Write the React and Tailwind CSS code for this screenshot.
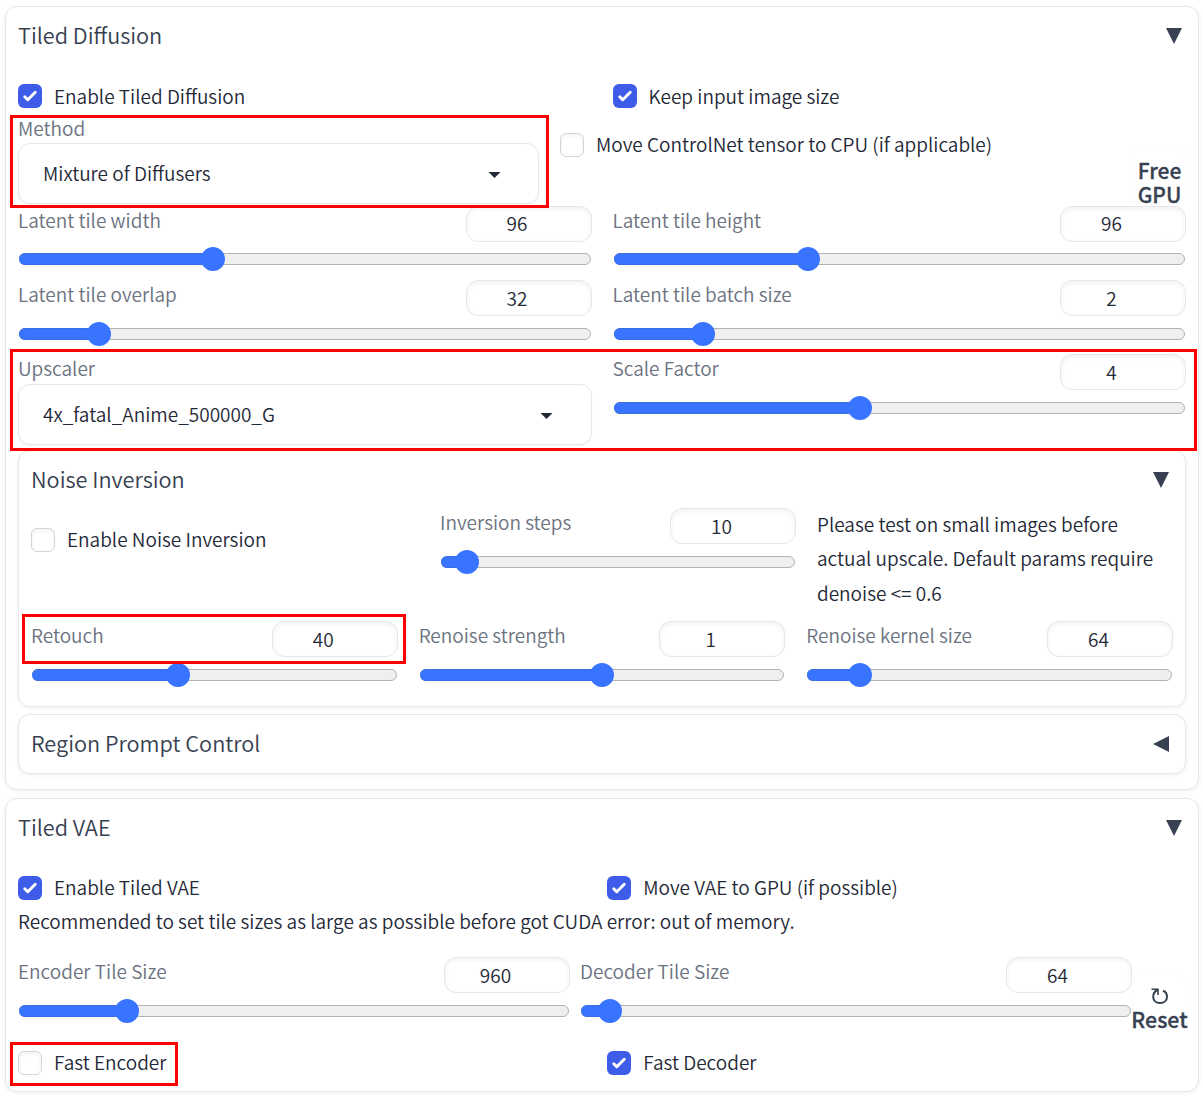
import React from "react";

const CHECK =
  "M12.207 4.793a1 1 0 010 1.414l-5 5a1 1 0 01-1.414 0l-2-2a1 1 0 011.414-1.414L6.5 9.086l4.293-4.293a1 1 0 011.414 0z";

function Checkbox({ checked, children, lift = "pb-[3px]" }) {
  return (
    <label className="flex h-6 items-center gap-3 whitespace-nowrap">
      {checked ? (
        <span className="h-6 w-6 shrink-0 rounded-[6px] bg-[#3d5de8]">
          <svg viewBox="0 0 16 16" className="h-6 w-6" fill="white">
            <path d={CHECK} />
          </svg>
        </span>
      ) : (
        <span className="h-6 w-6 shrink-0 rounded-[6px] border border-[#d1d5db] bg-white shadow-[inset_0_2px_4px_rgba(0,0,0,0.05)]" />
      )}
      <span className={`text-[19px] leading-[23px] font-[350] text-[#1f2937] ${lift}`}>{children}</span>
    </label>
  );
}

function Slider({ label, value, at, gap = "mt-3", line = "leading-[34px]" }) {
  return (
    <div className="min-w-0">
      <div className="flex h-9 justify-between">
        <span className="h-7 whitespace-nowrap text-[19px] leading-7 font-[350] text-[#6b7280]">{label}</span>
        <span
          className={`h-9 w-[126px] shrink-0 rounded-[12px] border border-[#e5e7eb] bg-white pr-[23px] text-center text-[19px] font-[350] text-[#1f2937] shadow-[inset_0_2px_5px_rgba(0,0,0,0.06)] ${line}`}
        >
          {value}
        </span>
      </div>
      <div className={`${gap} relative mx-px h-3 rounded-full border border-[#b2b2b2] bg-[#efefef]`}>
        <div className="absolute -top-px -left-px h-3 rounded-full border-y border-[#3b6fe0] bg-[#3874ff]" style={{ width: at }} />
        <div className="absolute -top-[7px] h-6 w-6 rounded-full bg-[#3874ff]" style={{ left: at - 13 }} />
      </div>
    </div>
  );
}

function Select({ label, value, caret, lift }) {
  return (
    <div className="w-full">
      <div className={`h-6 whitespace-nowrap text-[19px] font-[350] text-[#6b7280] ${lift}`}>{label}</div>
      <div className={`flex h-[61px] items-center justify-between rounded-[12px] border border-[#e5e7eb] bg-white pl-6 shadow-[0_1px_2px_rgba(0,0,0,0.05)] ${caret}`}>
        <span className="pb-0.5 text-[19px] leading-6 font-[350] text-[#1f2937]">{value}</span>
        <svg viewBox="0 0 18 18" className="h-[27px] w-[27px]" fill="#1f2937">
          <path d="M5 8l4 4 4-4z" />
        </svg>
      </div>
    </div>
  );
}

function Header({ title, closed }) {
  return (
    <div className="flex h-[58px] items-center justify-between">
      <h2 className="pb-[3px] text-[21.7px] leading-6 font-[350] text-[#374151]">{title}</h2>
      <svg viewBox="0 0 16 16" className="mr-1 mb-px h-4 w-4" fill="#374151">
        <path d={closed ? "M16 0v16L0 8z" : "M0 0h16L8 16z"} />
      </svg>
    </div>
  );
}

function Panel({ className, children }) {
  return (
    <section className={`rounded-[12px] border border-[#e5e7eb] bg-white px-3 shadow-[0_1px_4px_rgba(0,0,0,0.07)] ${className}`}>
      {children}
    </section>
  );
}

function Mark({ className }) {
  return <div className={`pointer-events-none absolute z-10 border-[3px] border-[#ff0000] ${className}`} />;
}

function TiledDiffusion() {
  return (
    <Panel className="h-[784px]">
      <Header title="Tiled Diffusion" />
      <div className="mt-[19px] grid h-[35px] grid-cols-2 gap-[21px]">
        <Checkbox checked lift="pb-px">Enable Tiled Diffusion</Checkbox>
        <Checkbox checked lift="pb-px">Keep input image size</Checkbox>
      </div>
      <div className="relative flex h-[87px] items-start">
        <Mark className="-top-1 -left-2 h-[93px] w-[539px]" />
        <div className="w-[521px] shrink-0">
          <Select label="Method" value="Mixture of Diffusers" caret="pr-[30px]" lift="leading-[18px]" />
        </div>
        <div className="mt-[14px] ml-[21px] grow">
          <Checkbox>Move ControlNet tensor to CPU (if applicable)</Checkbox>
        </div>
        <button className="mt-7 h-[57px] w-[53px] shrink-0 rounded-[12px] bg-white pt-[11px] text-center text-[21px] leading-6 font-medium text-[#374151] shadow-[0_0_2px_rgba(0,0,0,0.06)] [-webkit-text-stroke:0.3px_#374151]">
          Free GPU
        </button>
      </div>
      <div className="grid h-[74px] grid-cols-2 gap-[21px]">
        <Slider label="Latent tile width" value="96" at={194} gap="mt-[11px]" line="leading-8" />
        <Slider label="Latent tile height" value="96" at={194.5} gap="mt-[11px]" line="leading-8" />
      </div>
      <div className="grid h-[74px] grid-cols-2 gap-[21px]">
        <Slider label="Latent tile overlap" value="32" at={80} />
        <Slider label="Latent tile batch size" value="2" at={89.5} />
      </div>
      <div className="relative grid h-24 grid-cols-2 gap-[21px]">
        <Mark className="-top-[5px] -left-2 h-[102px] w-[1187px]" />
        <div className="pt-[6px]">
          <Select label="Upscaler" value="4x_fatal_Anime_500000_G" caret="pr-[31px]" lift="leading-4" />
        </div>
        <Slider label="Scale Factor" value="4" at={246.5} />
      </div>
      <Panel className="h-[257px]">
        <Header title="Noise Inversion" />
        <div className="-mt-px flex h-[113px] items-start gap-[21px]">
          <div className="mt-5 w-[388px] shrink-0">
            <Checkbox>Enable Noise Inversion</Checkbox>
          </div>
          <div className="w-[356px] shrink-0">
            <Slider label="Inversion steps" value="10" at={26} />
          </div>
          <p className="-mt-px text-[19px] leading-[34.4px] font-[350] whitespace-nowrap text-[#1f2937]">
            Please test on small images before
            <br />
            actual upscale. Default params require
            <br />
            denoise &lt;= 0.6
          </p>
        </div>
        <div className="relative grid grid-cols-3 gap-[21px]">
          <Mark className="-top-[7px] -left-[9px] h-[50px] w-[384px]" />
          <Slider label="Retouch" value="40" at={146} />
          <Slider label="Renoise strength" value="1" at={182.3} />
          <Slider label="Renoise kernel size" value="64" at={52.7} />
        </div>
      </Panel>
      <Panel className="mt-[7px] h-[60px]">
        <Header title="Region Prompt Control" closed />
      </Panel>
    </Panel>
  );
}

function TiledVae() {
  return (
    <Panel className="mt-2 h-[294px]">
      <Header title="Tiled VAE" />
      <div className="mt-[19px] flex h-[29px]">
        <div className="w-[589.3px]">
          <Checkbox checked>Enable Tiled VAE</Checkbox>
        </div>
        <Checkbox checked>Move VAE to GPU (if possible)</Checkbox>
      </div>
      <p className="h-[52px] text-[19px] leading-8 font-[350] whitespace-nowrap text-[#1f2937]">
        Recommended to set tile sizes as large as possible before got CUDA error: out of memory.
      </p>
      <div className="flex h-[94px] items-start">
        <div className="w-[552px]">
          <Slider label="Encoder Tile Size" value="960" at={108} />
        </div>
        <div className="ml-[10px] w-[552px]">
          <Slider label="Decoder Tile Size" value="64" at={29} />
        </div>
        <button className="mt-[15px] ml-px flex h-[58px] w-[53px] flex-col items-center rounded-[12px] bg-white pt-4 text-[21.3px] leading-6 font-medium text-[#374151] shadow-[0_0_2px_rgba(0,0,0,0.06)] [-webkit-text-stroke:0.3px_#374151]">
          <svg viewBox="0 0 18 17" className="mb-[2px] h-[17px] w-[18px] shrink-0" fill="none" stroke="#374151">
            <path d="M.5 1.3H7V7" strokeWidth="1.6" />
            <path d="M6.5 2C3.5 3.4 2.2 6 2.2 8.7c0 4 2.8 6.3 6.8 6.3s7-2.3 7-6.3c0-3-1.5-5-4-5.9" strokeWidth="2" />
          </svg>
          <span>Reset</span>
        </button>
      </div>
      <div className="relative flex">
        <Mark className="-top-[9px] -left-2 h-11 w-[168px]" />
        <div className="w-[589.3px]">
          <Checkbox>Fast Encoder</Checkbox>
        </div>
        <Checkbox checked>Fast Decoder</Checkbox>
      </div>
    </Panel>
  );
}

export default function App() {
  return (
    <main className="h-[1097px] w-[1203px] overflow-hidden bg-white pt-[6px] pr-1 pl-[5px] font-['Noto_Sans_CJK_SC','Noto_Sans',sans-serif]">
      <TiledDiffusion />
      <TiledVae />
    </main>
  );
}
